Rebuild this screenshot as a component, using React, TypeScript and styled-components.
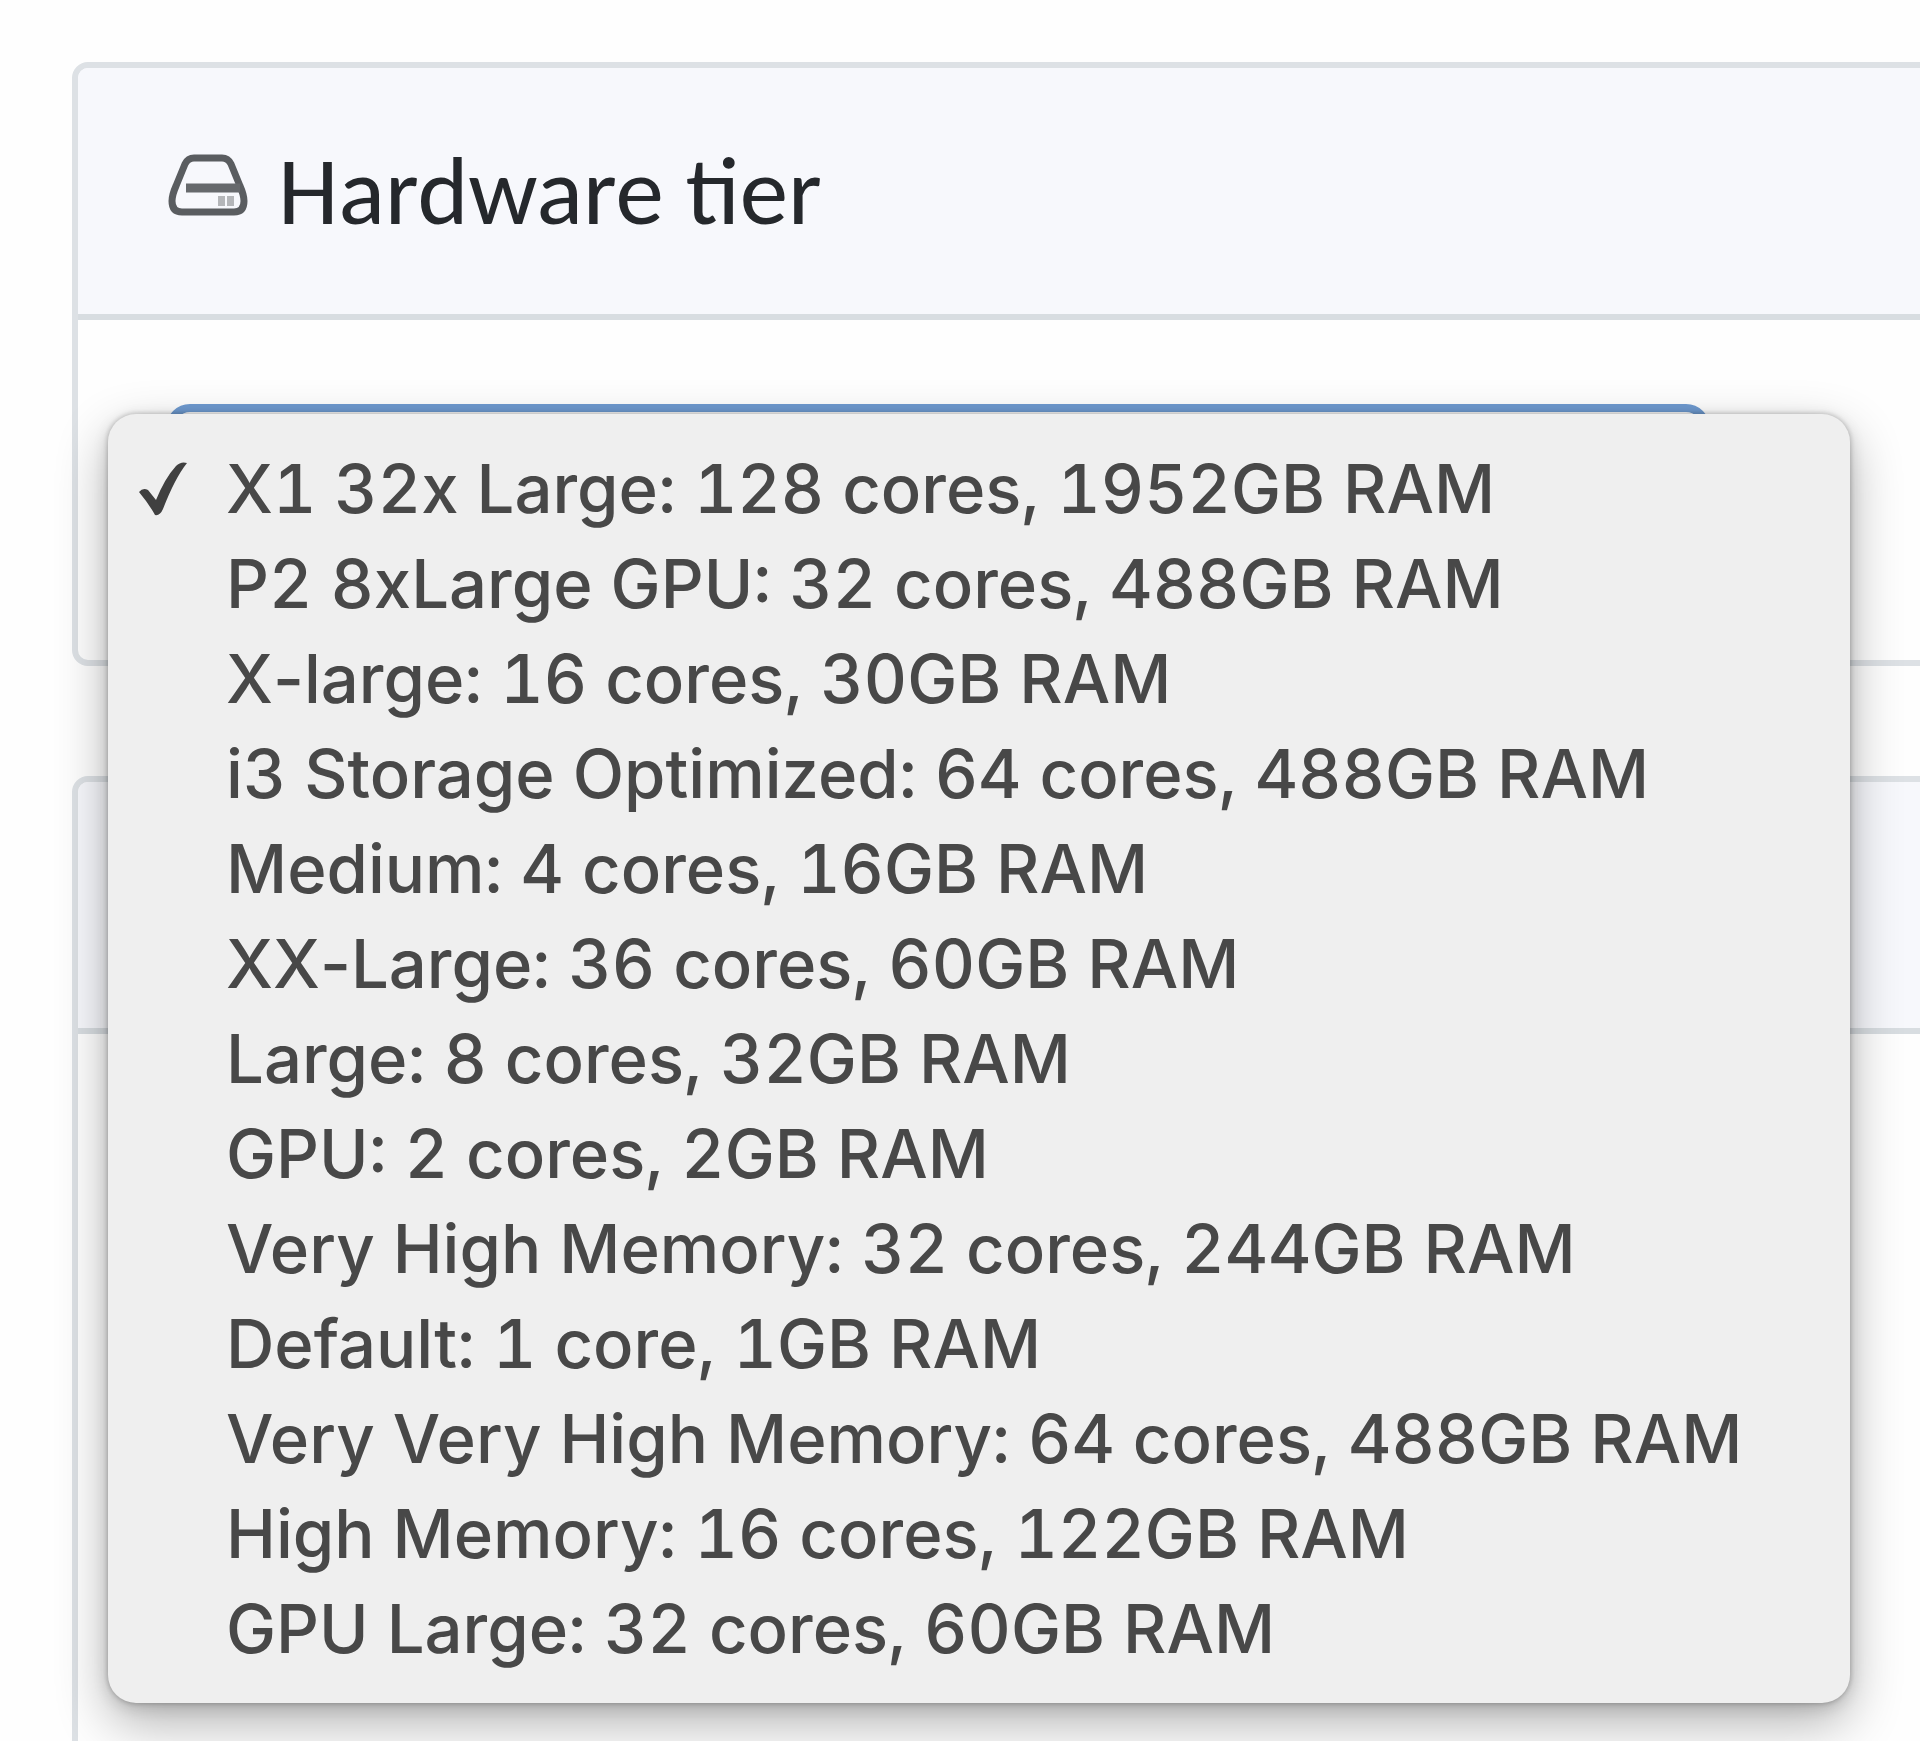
import React, { Fragment, useState } from "react";
import styled, { createGlobalStyle } from "styled-components";

const GlobalStyle = createGlobalStyle`
  *, *::before, *::after { box-sizing: border-box; }
  body { margin: 0; background: #fefefe; }
`;

const Page = styled.main`
  display: flex;
  flex-direction: column;
  gap: 110px;
  min-height: 100vh;
  padding: 62px 0 0 72px;
  overflow: hidden;
`;

const Card = styled.section<{ $grow?: boolean }>`
  display: flex;
  flex-direction: column;
  flex: ${(p) => (p.$grow ? "1 0 auto" : "0 0 auto")};
  margin-right: -40px;
  border: 6px solid #dde1e5;
  border-bottom-width: ${(p) => (p.$grow ? "0" : "6px")};
  border-radius: ${(p) => (p.$grow ? "16px 16px 0 0" : "16px")};
  background: #fefefe;
`;

const CardHeader = styled.header`
  display: flex;
  align-items: center;
  gap: 30px;
  height: 252px;
  padding: 0 90px;
  border-bottom: 6px solid #d8dde1;
  border-radius: 10px 10px 0 0;
  background: #f7f8fc;
`;

const CardTitle = styled.label`
  font-family: Carlito, Lato, sans-serif;
  font-size: 97px;
  font-weight: 400;
  line-height: 112px;
  color: #25282c;
`;

const DriveIcon = styled.svg`
  width: 80px;
  height: 64px;
  margin-bottom: 12px;
`;

const CardBody = styled.div`
  padding: 84px 88px 90px;
`;

const Field = styled.div`
  position: relative;
  max-width: 1544px;
`;

const TierSelect = styled.select`
  display: block;
  width: 100%;
  height: 166px;
  padding: 0 60px;
  border: 8px solid #6f9bd1;
  border-radius: 24px;
  background: #fefefe;
  font-family: Inter, sans-serif;
  font-size: 67px;
  color: #484848;
  appearance: none;
`;

const Menu = styled.div`
  position: absolute;
  top: 10px;
  left: -58px;
  right: -140px;
  z-index: 1;
  display: flex;
  flex-direction: column;
  padding: 27px 26px;
  border-radius: 28px;
  background: #efefef;
  box-shadow:
    0 0 4px 1px rgba(0, 0, 0, 0.18),
    0 4px 16px rgba(0, 0, 0, 0.14),
    0 20px 52px rgba(0, 0, 0, 0.3);
`;

const MenuItem = styled.button`
  display: grid;
  grid-template-columns: 92px 1fr;
  align-items: center;
  padding: 0;
  border: 0;
  background: transparent;
  font-family: Inter, sans-serif;
  font-size: 67px;
  font-weight: 500;
  font-variant-numeric: tabular-nums;
  line-height: 95px;
  color: #484848;
  text-align: left;
  white-space: nowrap;
`;

const CheckIcon = styled.svg`
  width: 52px;
  height: 58px;
  margin-left: 4px;
`;

const ItemLabel = styled.span`
  grid-column: 2;
`;

const Hyphen = styled.span`
  font-variant-numeric: normal;
`;

const tiers = [
  "X1 32x Large: 128 cores, 1952GB RAM",
  "P2 8xLarge GPU: 32 cores, 488GB RAM",
  "X-large: 16 cores, 30GB RAM",
  "i3 Storage Optimized: 64 cores, 488GB RAM",
  "Medium: 4 cores, 16GB RAM",
  "XX-Large: 36 cores, 60GB RAM",
  "Large: 8 cores, 32GB RAM",
  "GPU: 2 cores, 2GB RAM",
  "Very High Memory: 32 cores, 244GB RAM",
  "Default: 1 core, 1GB RAM",
  "Very Very High Memory: 64 cores, 488GB RAM",
  "High Memory: 16 cores, 122GB RAM",
  "GPU Large: 32 cores, 60GB RAM",
];

// Digits are tabular; hyphens keep their proportional width.
function TierName({ name }: { name: string }) {
  return (
    <ItemLabel>
      {name.split("-").map((part, i) => (
        <Fragment key={i}>
          {i > 0 && <Hyphen>-</Hyphen>}
          {part}
        </Fragment>
      ))}
    </ItemLabel>
  );
}

export default function App() {
  const [tier, setTier] = useState(tiers[0]);

  return (
    <>
      <GlobalStyle />
      <Page>
        <Card>
          <CardHeader>
            <DriveIcon viewBox="0 0 80 64" fill="none" aria-hidden="true">
              <path
                d="M26 5H54Q60 5 63 11L72 33Q76 42 76 48Q76 59 66 59H14Q4 59 4 48Q4 42 8 33L17 11Q20 5 26 5Z"
                stroke="#5a5d60"
                strokeWidth="7"
                strokeLinejoin="round"
              />
              <path d="M18 35H72" stroke="#66696c" strokeWidth="9" />
              <path d="M50 48H57M59 48H66" stroke="#b4b6b9" strokeWidth="10" />
            </DriveIcon>
            <CardTitle htmlFor="hardware-tier">Hardware tier</CardTitle>
          </CardHeader>
          <CardBody>
            <Field>
              <TierSelect
                id="hardware-tier"
                value={tier}
                onChange={(e) => setTier(e.target.value)}
              >
                {tiers.map((name) => (
                  <option key={name}>{name}</option>
                ))}
              </TierSelect>
              <Menu role="listbox" aria-label="Hardware tier">
                {tiers.map((name) => (
                  <MenuItem
                    key={name}
                    type="button"
                    role="option"
                    aria-selected={name === tier}
                    onClick={() => setTier(name)}
                  >
                    {name === tier && (
                      <CheckIcon viewBox="0 0 52 58" aria-hidden="true">
                        <path
                          d="M1 32Q5 27 10 30L18 40Q27 18 38 6Q43 1 49 3Q37 18 25 49Q22 56 17 55Q11 44 1 32Z"
                          fill="#404040"
                        />
                      </CheckIcon>
                    )}
                    <TierName name={name} />
                  </MenuItem>
                ))}
              </Menu>
            </Field>
          </CardBody>
        </Card>
        <Card $grow>
          <CardHeader />
        </Card>
      </Page>
    </>
  );
}
